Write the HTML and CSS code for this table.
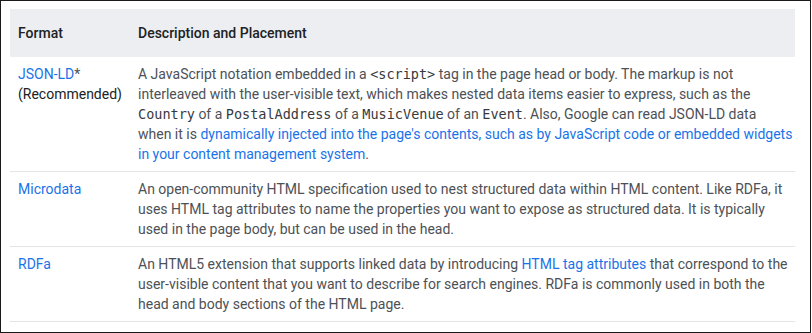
FILE: index.html
```html
<!DOCTYPE html>
<html lang="en">
<head>
    <meta charset="UTF-8">
    <meta name="viewport" content="width=device-width, initial-scale=1.0">
    <title>Structured data formats</title>
    <link rel="stylesheet" href="styles.css">
</head>
<body>
    <div class="frame">
        <table class="formats">
            <thead>
                <tr>
                    <th class="col-format">Format</th>
                    <th>Description and Placement</th>
                </tr>
            </thead>
            <tbody>
                <tr>
                    <td><a href="#">JSON-LD</a>*<br><span class="note">(Recommended)</span></td>
                    <td class="desc">A JavaScript notation embedded in a <code>&lt;script&gt;</code> tag in the page head or body. The markup is not interleaved with the user-visible text, which makes nested data items easier to express, such as the <code>Country</code> of a <code>PostalAddress</code> of a <code>MusicVenue</code> of an <code>Event</code>. Also, Google can read JSON-LD data when it is <a href="#">dynamically injected into the page's contents, such as by JavaScript code or embedded widgets in your content management system</a>.</td>
                </tr>
                <tr>
                    <td><a href="#">Microdata</a></td>
                    <td class="desc">An open-community HTML specification used to nest structured data within HTML content. Like RDFa, it uses HTML tag attributes to name the properties you want to expose as structured data. It is typically used in the page body, but can be used in the head.</td>
                </tr>
                <tr>
                    <td><a href="#">RDFa</a></td>
                    <td class="desc">An HTML5 extension that supports linked data by introducing <a href="#">HTML tag attributes</a> that correspond to the user-visible content that you want to describe for search engines. RDFa is commonly used in both the head and body sections of the HTML page.</td>
                </tr>
            </tbody>
        </table>
    </div>
</body>
</html>
```

FILE: styles.css
```css
body {
    margin: 0;
    background-color: #fff;
    font-family: Roboto, 'Noto Sans', sans-serif;
}
.frame {
    width: 811px;
    height: 333px;
    border: 1px solid #1a1a1a;
    padding: 8px 0 0 9px;
    box-sizing: border-box;
}
.formats {
    border-collapse: collapse;
    width: 785px;
    font-size: 14px;
    line-height: 20px;
    color: #4d5156;
}
.formats th {
    background-color: #eceef1;
    color: #202124;
    font-weight: 500;
    text-align: left;
    height: 48px;
    padding: 0 8px;
    box-sizing: border-box;
}
.formats .col-format {
    width: 120px;
}
.formats td {
    vertical-align: top;
    padding: 7px 8px 7px;
    border-bottom: 1px solid #e3e5e8;
}
.formats .desc {
    padding-right: 2px;
}
.formats a {
    color: #1a73e8;
    text-decoration: none;
}
.formats .note {
    color: #202124;
}
.formats code {
    font-family: 'DejaVu Sans Mono', monospace;
    font-size: 13.5px;
    color: #37393d;
}
```
